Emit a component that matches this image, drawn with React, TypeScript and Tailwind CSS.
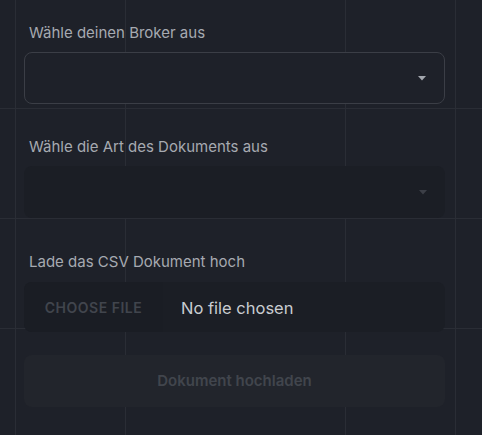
import React from 'react';

function Caret({ className }: { className: string }) {
  return (
    <svg width="8" height="5" viewBox="0 0 8 5" className={className}>
      <path d="M0 0h8L4 4.5z" fill="currentColor" />
    </svg>
  );
}

function GridBackdrop() {
  const xs = [15, 125, 345, 455];
  const ys = [108, 218, 328];
  return (
    <svg className="absolute inset-0 h-full w-full" aria-hidden="true">
      {xs.map((x) => (
        <line key={'x' + x} x1={x + 0.5} y1={0} x2={x + 0.5} y2={435} stroke="#2a2d35" strokeWidth="1" />
      ))}
      {ys.map((y) => (
        <line key={'y' + y} x1={0} y1={y + 0.5} x2={482} y2={y + 0.5} stroke="#2a2d35" strokeWidth="1" />
      ))}
    </svg>
  );
}

export default function App() {
  return (
    <div className="relative h-[435px] w-[482px] overflow-hidden bg-[#1e2129] font-['Inter',sans-serif]">
      <GridBackdrop />
      <form className="relative ml-6 flex w-[421px] flex-col pt-[23px]">
        <label className="pl-[5px] text-[15px] leading-5 text-[#a6aab1]">Wähle deinen Broker aus</label>
        <div className="mt-[9px] flex h-[52px] items-center justify-end rounded-lg border border-[#3b3e46] bg-[#1e2129] pr-[18px]">
          <Caret className="text-[#a3a7ae]" />
        </div>

        <label className="mt-[33px] pl-[5px] text-[15px] leading-5 text-[#a6aab1]">Wähle die Art des Dokuments aus</label>
        <div className="mt-[9px] flex h-[52px] items-center justify-end rounded-lg bg-[#1b1e25] pr-[18px]">
          <Caret className="text-[#3c3f47]" />
        </div>

        <label className="mt-[34px] pl-[5px] text-[15px] leading-5 text-[#a6aab1]">Lade das CSV Dokument hoch</label>
        <div className="mt-[10px] flex h-[50px] items-center overflow-hidden rounded-lg bg-[#1b1e25]">
          <span className="flex h-full w-[139px] items-center justify-center bg-[#1a1d24] text-[14px] font-semibold tracking-[0.5px] text-[#41454d]">
            CHOOSE FILE
          </span>
          <span className="pl-[18px] pt-[3px] text-[16.5px] text-[#c9ccd1]">No file chosen</span>
        </div>

        <button
          type="button"
          disabled
          className="mt-[23px] h-[52px] rounded-lg bg-[#22252c] text-[15px] font-semibold text-[#41454d]"
        >
          Dokument hochladen
        </button>
      </form>
    </div>
  );
}
